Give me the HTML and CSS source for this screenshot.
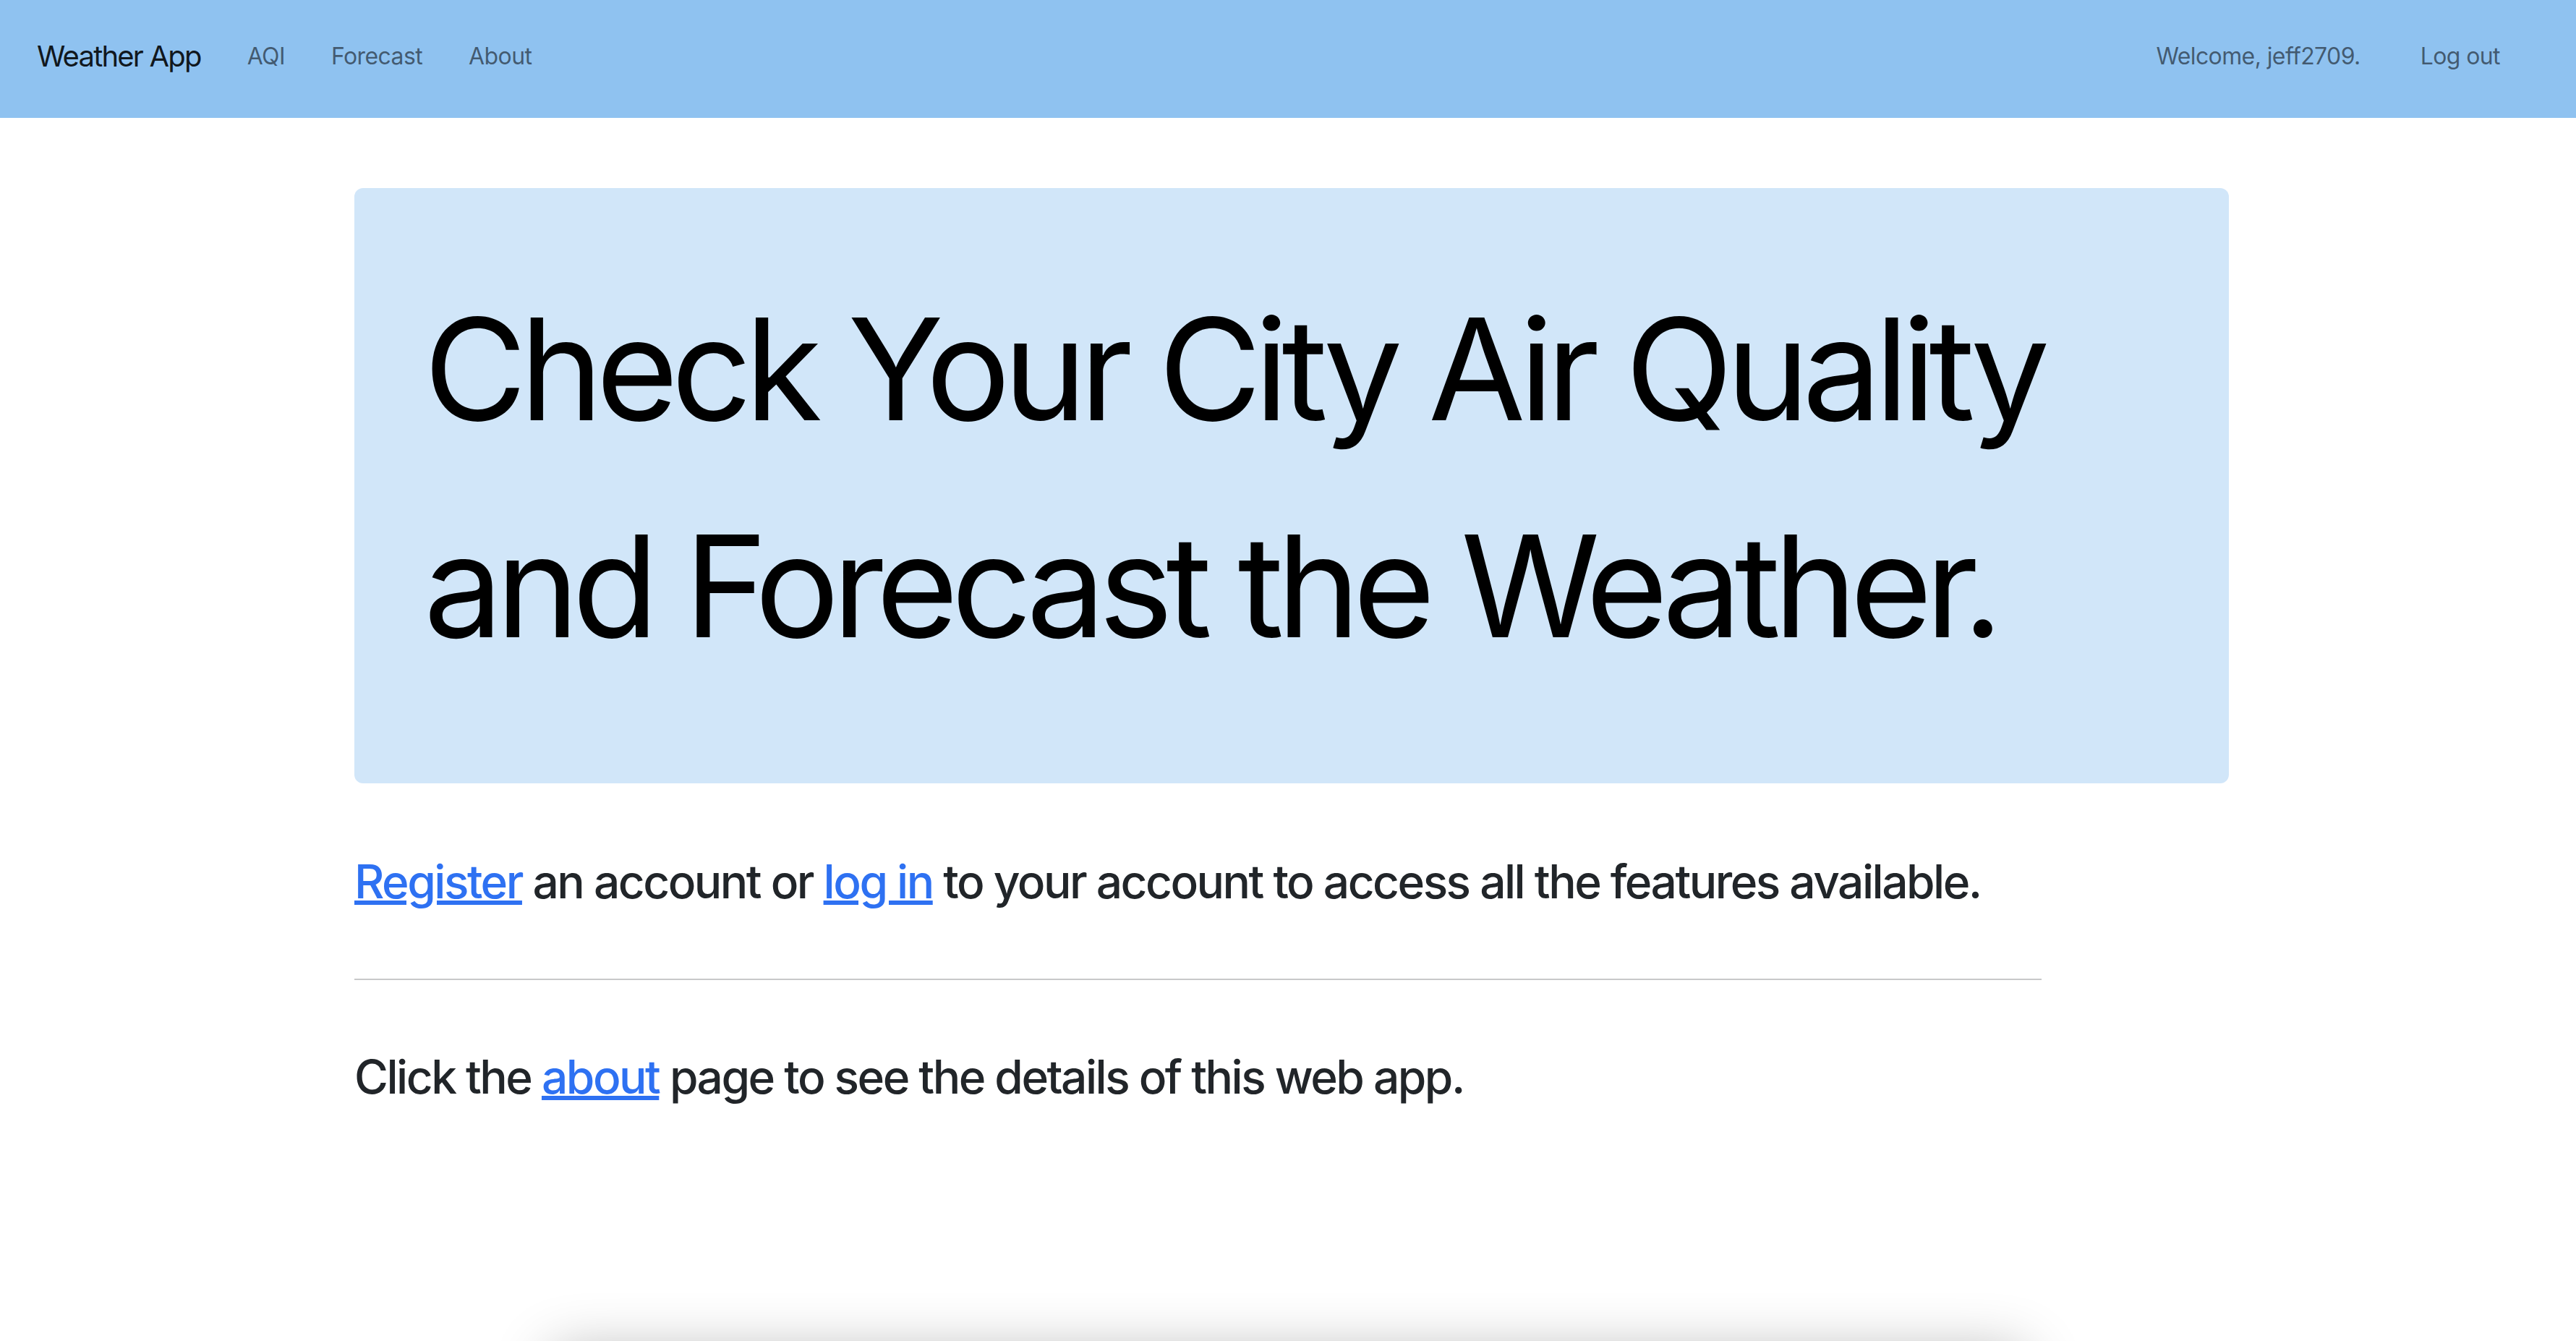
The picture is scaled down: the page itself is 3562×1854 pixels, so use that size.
FILE: index.html
```html
<!DOCTYPE html>
<html lang="en">
<head>
<meta charset="utf-8">
<title>Weather App</title>
<link rel="stylesheet" href="styles.css">
</head>
<body>
<nav class="navbar">
  <div class="nav-left">
    <a class="brand" href="#">Weather App</a>
    <ul class="nav-links">
      <li><a href="#">AQI</a></li>
      <li><a href="#">Forecast</a></li>
      <li><a href="#">About</a></li>
    </ul>
  </div>
  <div class="nav-right">
    <span class="welcome">Welcome, jeff2709.</span>
    <a href="#">Log out</a>
  </div>
</nav>
<main class="container">
  <section class="hero">
    <h1 class="hero-title">Check Your City Air Quality<br>and Forecast the Weather.</h1>
  </section>
  <h2 class="line line-first"><a href="#">Register</a> an account or <a href="#">log in</a> to your account to access all the features available.</h2>
  <hr class="divider">
  <h2 class="line"><span>Click the </span><a href="#">about</a> page to see the details of this web app.</h2>
  <div class="card-peek"></div>
</main>
</body>
</html>
```
FILE: styles.css
```css
* { box-sizing: border-box; }
html, body { margin: 0; padding: 0; background: #ffffff; }
body {
  font-family: Inter, "Noto Sans", "Liberation Sans", sans-serif;
  color: #212529;
  overflow: hidden;
}
a { text-decoration: none; color: inherit; }

.navbar {
  height: 163px;
  background: #8fc2f0;
  display: flex;
  align-items: center;
  justify-content: space-between;
  padding: 0 105px 9px 51px;
}
.nav-left, .nav-right { display: flex; align-items: center; }
.brand {
  font-size: 40px;
  color: rgba(0, 0, 0, 0.9);
  margin-right: 64px;
  letter-spacing: -1.8px;
}
.nav-links {
  list-style: none;
  margin: 0;
  padding: 0;
  display: flex;
  gap: 64px;
}
.nav-links a, .nav-right a, .welcome {
  font-size: 32px;
  color: rgba(0, 0, 0, 0.55);
  letter-spacing: -0.6px;
}
.nav-right { gap: 83px; }

.container {
  margin: 0 480px 0 490px;
  padding-top: 97px;
}
.hero {
  background: #d1e6f9;
  border-radius: 12px;
  padding: 100px 96px 92px;
}
.hero-title {
  margin: 0 0 31px;
  font-size: 195px;
  font-weight: 400;
  line-height: 300px;
  color: #000;
  letter-spacing: -9.7px;
  white-space: nowrap;
}
.line {
  margin: 0;
  font-size: 64px;
  font-weight: 500;
  line-height: 1.2;
  color: #212529;
  letter-spacing: -2.5px;
}
.line a {
  color: #2e71f2;
  text-decoration: underline;
  text-decoration-thickness: 6px;
  text-underline-offset: 3px;
}
.line-first { margin-top: 98px; }
.divider {
  width: 90%;
  margin: 95px 0 96px;
  border: 0;
  border-top: 2px solid #c8c9ca;
}
.card-peek {
  width: 2036px;
  height: 400px;
  margin: 342px 0 0 273px;
  background: #fff;
  border-radius: 12px;
  box-shadow: 0 0 80px rgba(0, 0, 0, 0.3);
}
```
